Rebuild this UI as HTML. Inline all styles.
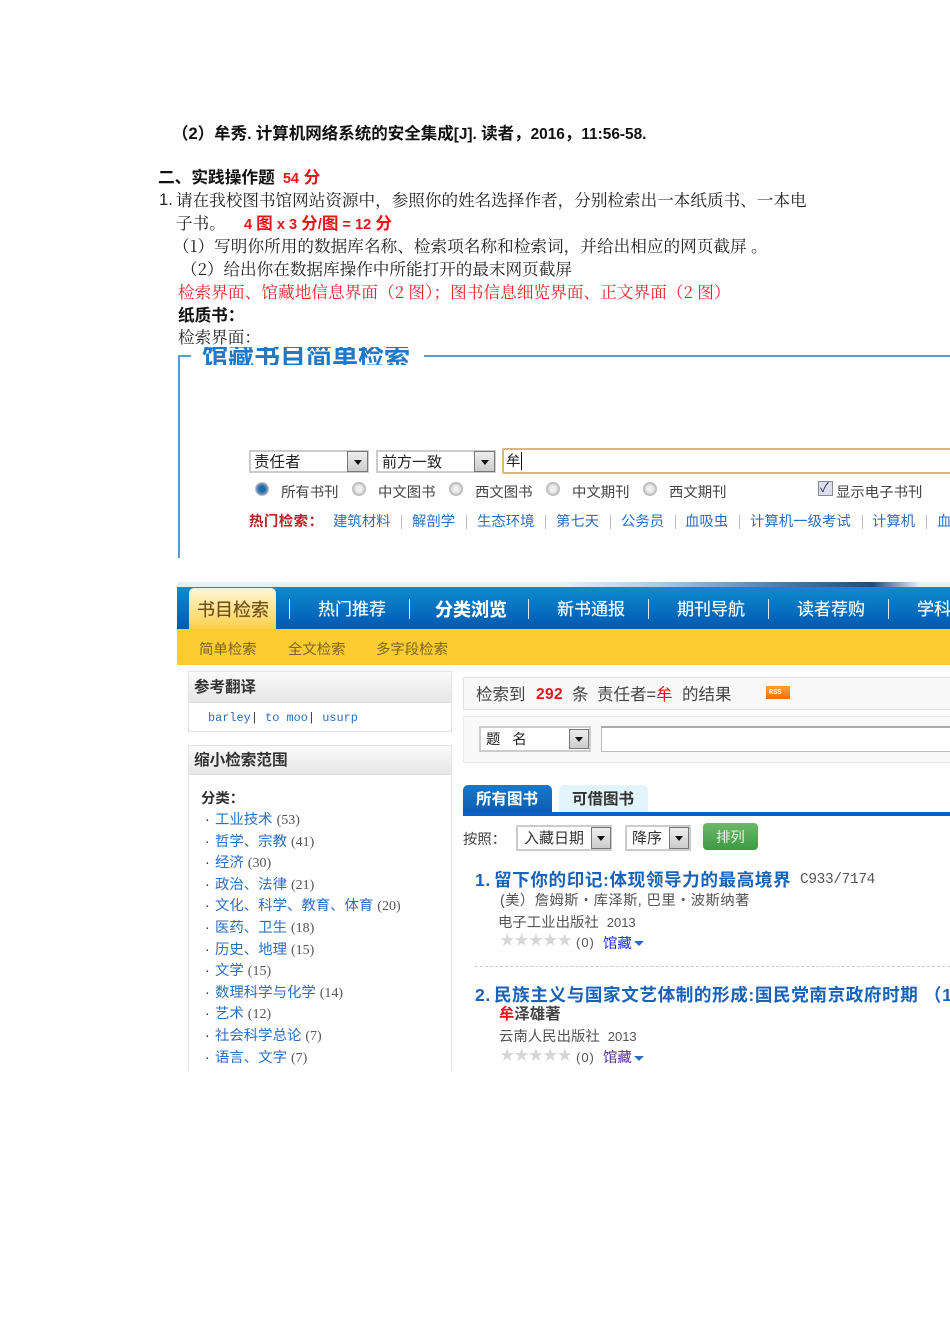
<!DOCTYPE html>
<html><head><meta charset="utf-8"><style>
html,body{margin:0;padding:0;background:#fff}
body{width:950px;height:1344px;position:relative;overflow:hidden}
#w{position:absolute;left:0;top:0;width:950px;height:1344px;overflow:hidden;filter:blur(.35px);font-family:"Liberation Sans","Noto Sans CJK SC",sans-serif;color:#222}
#w div,#w span.a{position:absolute}
.t{white-space:nowrap;line-height:20px;height:20px}
.d{font-family:"Noto Serif CJK SC",serif;font-size:16.6px;color:#222}
.b{font-weight:bold;color:#111;font-family:"Liberation Sans","Noto Sans CJK SC",sans-serif}
.r{color:#e8141c}
.l{color:#2a6fc2}
.s{font-size:14.4px;color:#444}
.n{color:#fff;font-size:17.8px;text-shadow:0 0 .4px #fff}
.sel{background:#fff;border:2px solid #ccc;box-sizing:border-box}
.ar{background:linear-gradient(#eee,#ccc);border:1px solid #777;box-sizing:border-box}
.ar:after{content:"";position:absolute;left:50%;top:50%;margin:-2px 0 0 -4px;border:4px solid transparent;border-top:5px solid #111;border-bottom:0}
.rd{width:14px;height:14px;border-radius:50%;background:radial-gradient(circle,#eee 35%,#aaa 90%);border:1px solid #bbb;box-sizing:border-box}
.sep{width:1px;background:#bbb}
.li{font-size:14.4px;color:#2a6fc2}
.li i{font-style:normal;color:#555;font-size:14px;font-family:"Liberation Serif",serif}
.tt{font-size:17.6px;font-weight:bold;color:#1a62b8;letter-spacing:.58px}
.star{color:#d6d6d6;font-size:14.4px;letter-spacing:0;line-height:14px}
.lat{font-size:15.4px;font-family:"Liberation Sans",sans-serif}
.lat2{font-size:14.6px;font-family:"Liberation Sans",sans-serif}
</style></head><body><div id="w">

<div class="t b" style="left:172px;top:124px;font-size:16.5px">（2）牟秀<span class="lat">. </span>计算机网络系统的安全集成<span class="lat">[J]. </span>读者，<span class="lat">2016</span>，<span class="lat">11:56-58.</span></div>
<div class="t b" style="left:158px;top:168px;font-size:16.7px">二、实践操作题<span class="r" style="margin-left:8px"><span class="lat2">54</span> 分</span></div>
<div class="t d" style="left:159px;top:190px;font-family:'Liberation Sans',sans-serif">1.</div>
<div class="t d" style="left:176px;top:189px">请在我校图书馆网站资源中，参照你的姓名选择作者，分别检索出一本纸质书、一本电</div>
<div class="t d" style="left:176px;top:212px">子书。</div>
<div class="t b r" style="left:244px;top:214px;font-size:16.6px;color:#e8141c"><span class="lat2">4 </span>图<span class="lat2"> x 3 </span>分<span class="lat2">/</span>图<span class="lat2"> = 12 </span>分</div>
<div class="t d" style="left:173px;top:235px;letter-spacing:.05px">（1）写明你所用的数据库名称、检索项名称和检索词，并给出相应的网页截屏 。</div>
<div class="t d" style="left:181px;top:258px">（2）给出你在数据库操作中所能打开的最末网页截屏</div>
<div class="t d" style="left:178px;top:281px;color:#e8242c;letter-spacing:.08px">检索界面、馆藏地信息界面（2 图）；图书信息细览界面、正文界面（2 图）</div>
<div class="t b" style="left:178px;top:306px;font-size:16.6px">纸质书：</div>
<div class="t d" style="left:178px;top:326px">检索界面：</div>

<!-- fieldset -->
<div style="left:178px;top:355px;width:2px;height:203px;background:#5b9bd0"></div>
<div style="left:178px;top:355px;width:13px;height:2px;background:#5b9bd0"></div>
<div style="left:424px;top:355px;width:526px;height:2px;background:#5b9bd0"></div>
<div style="left:200px;top:347px;width:215px;height:18px;overflow:hidden">
  <div class="t" style="left:2px;top:-6px;height:30px;line-height:30px;font-size:26px;font-weight:bold;color:#1f78c8;font-family:'Noto Sans CJK SC',sans-serif">馆藏书目简单检索</div>
</div>

<div class="sel" style="left:249px;top:450px;width:120px;height:23px"></div>
<div class="t" style="left:254px;top:453px;font-size:15.5px;color:#222">责任者</div>
<div class="ar" style="left:347px;top:451px;width:21px;height:21px"></div>
<div class="sel" style="left:376px;top:450px;width:120px;height:23px"></div>
<div class="t" style="left:382px;top:453px;font-size:15px;color:#222">前方一致</div>
<div class="ar" style="left:474px;top:451px;width:21px;height:21px"></div>
<div style="left:502px;top:448px;width:460px;height:26px;box-sizing:border-box;border:2px solid #dcb870;border-radius:2px;background:#fff"></div>
<div class="t" style="left:506px;top:452px;font-size:14.5px;color:#222">牟</div>
<div style="left:521px;top:452px;width:1px;height:18px;background:#111"></div>

<div class="rd" style="left:255px;top:482px;background:radial-gradient(circle,#1a6ea8 35%,#aac 80%)"></div>
<div class="rd" style="left:352px;top:482px"></div>
<div class="rd" style="left:449px;top:482px"></div>
<div class="rd" style="left:546px;top:482px"></div>
<div class="rd" style="left:643px;top:482px"></div>
<div class="t s" style="left:281px;top:483px">所有书刊</div>
<div class="t s" style="left:378px;top:483px">中文图书</div>
<div class="t s" style="left:475px;top:483px">西文图书</div>
<div class="t s" style="left:572px;top:483px">中文期刊</div>
<div class="t s" style="left:669px;top:483px">西文期刊</div>
<div style="left:818px;top:481px;width:15px;height:15px;box-sizing:border-box;border:1px solid #889;background:#dde"></div>
<div class="t" style="left:820px;top:478px;font-size:13px;color:#335">✓</div>
<div class="t s" style="left:836px;top:483px">显示电子书刊</div>

<div class="t" style="left:249px;top:512px;font-size:14.4px;font-weight:bold;color:#b8231f;letter-spacing:.5px">热门检索：</div>
<div class="t li" style="left:333px;top:512px">建筑材料</div><div class="sep" style="left:401px;top:515px;height:14px"></div>
<div class="t li" style="left:412px;top:512px">解剖学</div><div class="sep" style="left:466px;top:515px;height:14px"></div>
<div class="t li" style="left:477px;top:512px">生态环境</div><div class="sep" style="left:545px;top:515px;height:14px"></div>
<div class="t li" style="left:556px;top:512px">第七天</div><div class="sep" style="left:610px;top:515px;height:14px"></div>
<div class="t li" style="left:621px;top:512px">公务员</div><div class="sep" style="left:675px;top:515px;height:14px"></div>
<div class="t li" style="left:685px;top:512px">血吸虫</div><div class="sep" style="left:739px;top:515px;height:14px"></div>
<div class="t li" style="left:750px;top:512px">计算机一级考试</div><div class="sep" style="left:862px;top:515px;height:14px"></div>
<div class="t li" style="left:872px;top:512px">计算机</div><div class="sep" style="left:926px;top:515px;height:14px"></div>
<div class="t li" style="left:937px;top:512px">血吸虫</div>

<!-- nav -->
<div style="left:177px;top:582px;width:773px;height:6px;background:linear-gradient(90deg,#dff3fb 0,#dff3fb 50%,#a8cfe6 62%,#4a7ea6 78%,#1e4d78 90%,#dff3fb 96%)"></div>
<div style="left:177px;top:587px;width:773px;height:42px;background:linear-gradient(#0f8bd0,#0258b0)"></div>
<div style="left:189px;top:588px;width:87px;height:41px;border-radius:5px 5px 0 0;background:linear-gradient(#fff6d8,#fcd04a)"></div>
<div class="t" style="left:197px;top:600px;font-size:18px;color:#6e5018;text-shadow:0 0 .5px #6e5018">书目检索</div>
<div style="left:289px;top:599px;width:1px;height:20px;background:#dce9f5"></div>
<div class="t n" style="left:318px;top:600px;font-size:17px">热门推荐</div>
<div style="left:409px;top:599px;width:1px;height:20px;background:#dce9f5"></div>
<div class="t n" style="left:435px;top:600px;font-size:18px;font-weight:bold">分类浏览</div>
<div style="left:528px;top:599px;width:1px;height:20px;background:#dce9f5"></div>
<div class="t n" style="left:557px;top:600px;font-size:17px">新书通报</div>
<div style="left:648px;top:599px;width:1px;height:20px;background:#dce9f5"></div>
<div class="t n" style="left:677px;top:600px;font-size:17px">期刊导航</div>
<div style="left:768px;top:599px;width:1px;height:20px;background:#dce9f5"></div>
<div class="t n" style="left:797px;top:600px;font-size:17px">读者荐购</div>
<div style="left:888px;top:599px;width:1px;height:20px;background:#dce9f5"></div>
<div class="t n" style="left:917px;top:600px;font-size:17px">学科导航</div>
<div style="left:177px;top:629px;width:773px;height:36px;background:#fccc32"></div>
<div class="t" style="left:199px;top:640px;font-size:14.4px;color:#7a6428">简单检索</div>
<div class="t" style="left:288px;top:640px;font-size:14.4px;color:#7a6428">全文检索</div>
<div class="t" style="left:376px;top:640px;font-size:14.4px;color:#7a6428">多字段检索</div>

<!-- left boxes -->
<div style="left:188px;top:671px;width:264px;height:61px;box-sizing:border-box;border:1px solid #e4e4e4;background:#fff"></div>
<div style="left:189px;top:672px;width:262px;height:30px;background:linear-gradient(#fafafa,#e6e6e6);border-bottom:1px solid #ddd"></div>
<div class="t b" style="left:194px;top:678px;font-size:15.5px;color:#333">参考翻译</div>
<div class="t" style="left:208px;top:708px;font:11.9px/20px 'Liberation Mono',monospace;color:#2a6fc2">barley<span style="color:#333">|</span> to moo<span style="color:#333">|</span> usurp</div>

<div style="left:188px;top:745px;width:264px;height:326px;box-sizing:border-box;border:1px solid #e4e4e4;border-bottom:0;background:#fff"></div>
<div style="left:189px;top:746px;width:262px;height:28px;background:linear-gradient(#fafafa,#e6e6e6);border-bottom:1px solid #ddd"></div>
<div class="t b" style="left:194px;top:751px;font-size:15.6px;color:#333">缩小检索范围</div>
<div class="t b" style="left:201px;top:789px;font-size:14.4px;color:#333">分类：</div>
<div class="t li" style="left:205px;top:810px"><span style="color:#333">·</span></div><div class="t li" style="left:215px;top:810px">工业技术 <i>(53)</i></div>
<div class="t li" style="left:205px;top:832px"><span style="color:#333">·</span></div><div class="t li" style="left:215px;top:832px">哲学、宗教 <i>(41)</i></div>
<div class="t li" style="left:205px;top:853px"><span style="color:#333">·</span></div><div class="t li" style="left:215px;top:853px">经济 <i>(30)</i></div>
<div class="t li" style="left:205px;top:875px"><span style="color:#333">·</span></div><div class="t li" style="left:215px;top:875px">政治、法律 <i>(21)</i></div>
<div class="t li" style="left:205px;top:896px"><span style="color:#333">·</span></div><div class="t li" style="left:215px;top:896px">文化、科学、教育、体育 <i>(20)</i></div>
<div class="t li" style="left:205px;top:918px"><span style="color:#333">·</span></div><div class="t li" style="left:215px;top:918px">医药、卫生 <i>(18)</i></div>
<div class="t li" style="left:205px;top:940px"><span style="color:#333">·</span></div><div class="t li" style="left:215px;top:940px">历史、地理 <i>(15)</i></div>
<div class="t li" style="left:205px;top:961px"><span style="color:#333">·</span></div><div class="t li" style="left:215px;top:961px">文学 <i>(15)</i></div>
<div class="t li" style="left:205px;top:983px"><span style="color:#333">·</span></div><div class="t li" style="left:215px;top:983px">数理科学与化学 <i>(14)</i></div>
<div class="t li" style="left:205px;top:1004px"><span style="color:#333">·</span></div><div class="t li" style="left:215px;top:1004px">艺术 <i>(12)</i></div>
<div class="t li" style="left:205px;top:1026px"><span style="color:#333">·</span></div><div class="t li" style="left:215px;top:1026px">社会科学总论 <i>(7)</i></div>
<div class="t li" style="left:205px;top:1048px"><span style="color:#333">·</span></div><div class="t li" style="left:215px;top:1048px">语言、文字 <i>(7)</i></div>

<!-- right -->
<div style="left:463px;top:677px;width:500px;height:33px;box-sizing:border-box;border:1px solid #e2e2e2;background:#f8f8f8"></div>
<div class="t" style="left:476px;top:685px;font-size:16.5px;color:#444">检索到</div>
<div class="t" style="left:536px;top:685px;font-size:15.5px;font-weight:bold;color:#e8141c;letter-spacing:.4px">292</div>
<div class="t" style="left:572px;top:685px;font-size:16.5px;color:#444">条</div>
<div class="t" style="left:597px;top:685px;font-size:16.5px;color:#444">责任者=<span class="r">牟</span></div>
<div class="t" style="left:682px;top:685px;font-size:16.5px;color:#444">的结果</div>
<div style="left:766px;top:686px;width:24px;height:13px;background:linear-gradient(#ffa030,#f07010)"></div>
<div class="t" style="left:769px;top:683px;font:bold 7px/20px 'Liberation Mono',monospace;color:#fff">RSS</div>

<div style="left:463px;top:716px;width:500px;height:47px;box-sizing:border-box;border:1px solid #e8e8e8;background:#f9f9f9"></div>
<div class="sel" style="left:479px;top:726px;width:112px;height:26px;background:#fff"></div>
<div class="t" style="left:486px;top:730px;font-size:14.4px;color:#222">题&nbsp;&nbsp;&nbsp;名</div>
<div class="ar" style="left:569px;top:729px;width:20px;height:20px"></div>
<div style="left:601px;top:726px;width:360px;height:26px;box-sizing:border-box;border:1px solid #bbb;border-top:2px solid #aaa;background:#fff"></div>

<div style="left:463px;top:785px;width:89px;height:29px;border-radius:5px 5px 0 0;background:linear-gradient(#1a78c8,#0a5cb0)"></div>
<div class="t" style="left:476px;top:790px;font-size:15.5px;font-weight:bold;color:#fff">所有图书</div>
<div style="left:559px;top:785px;width:89px;height:27px;border-radius:5px 5px 0 0;background:#e2f4fc"></div>
<div class="t" style="left:572px;top:790px;font-size:15.5px;font-weight:bold;color:#333">可借图书</div>
<div style="left:463px;top:812px;width:487px;height:4px;background:#0d5fc8"></div>

<div class="t" style="left:463px;top:830px;font-size:14.4px;color:#444">按照：</div>
<div class="sel" style="left:516px;top:825px;width:96px;height:26px"></div>
<div class="t" style="left:524px;top:829px;font-size:15px;color:#333">入藏日期</div>
<div class="ar" style="left:591px;top:827px;width:20px;height:22px"></div>
<div class="sel" style="left:625px;top:825px;width:66px;height:26px"></div>
<div class="t" style="left:632px;top:829px;font-size:15px;color:#333">降序</div>
<div class="ar" style="left:669px;top:827px;width:20px;height:22px"></div>
<div style="left:703px;top:823px;width:55px;height:27px;border-radius:4px;background:linear-gradient(#6cb868,#3f9a45)"></div>
<div class="t" style="left:716px;top:828px;font-size:14.4px;color:#e6f4e4">排列</div>

<div class="t tt" style="left:475px;top:870px">1.</div>
<div class="t tt" style="left:494px;top:870px">留下你的印记:体现领导力的最高境界</div>
<div class="t" style="left:800px;top:870px;font:14.4px/20px 'Liberation Mono',monospace;color:#555;letter-spacing:-.3px">C933/7174</div>
<div class="t" style="left:500px;top:891px;font-size:14.4px;color:#555;letter-spacing:.35px">(美）詹姆斯・库泽斯,  巴里・波斯纳著</div>
<div class="t" style="left:498px;top:913px;font-size:14.4px;color:#555">电子工业出版社&nbsp; <span style="font-size:13px">2013</span></div>
<div class="t star" style="left:500px;top:934px">★★★★★</div>
<div class="t" style="left:576px;top:933px;font-size:13px;color:#555;letter-spacing:1px">(0)</div>
<div class="t" style="left:603px;top:934px;font-size:14.4px;color:#1a2fd0">馆藏</div>
<div style="left:634px;top:941px;border:5px solid transparent;border-top:5px solid #2a6fc2;border-bottom:0"></div>
<div style="left:475px;top:966px;width:475px;height:0;border-top:1px dashed #ccc"></div>

<div class="t tt" style="left:475px;top:985px">2.</div>
<div class="t tt" style="left:494px;top:985px">民族主义与国家文艺体制的形成:国民党南京政府时期 （1927-1937）</div>
<div class="t" style="left:499px;top:1005px;font-size:15.4px;font-weight:bold;color:#444"><span class="r">牟</span>泽雄著</div>
<div class="t" style="left:499px;top:1027px;font-size:14.4px;color:#555">云南人民出版社&nbsp; <span style="font-size:13px">2013</span></div>
<div class="t star" style="left:500px;top:1049px">★★★★★</div>
<div class="t" style="left:576px;top:1048px;font-size:13px;color:#555;letter-spacing:1px">(0)</div>
<div class="t" style="left:603px;top:1048px;font-size:14.4px;color:#5a2a98">馆藏</div>
<div style="left:634px;top:1056px;border:5px solid transparent;border-top:5px solid #2a6fc2;border-bottom:0"></div>

</div></body></html>
